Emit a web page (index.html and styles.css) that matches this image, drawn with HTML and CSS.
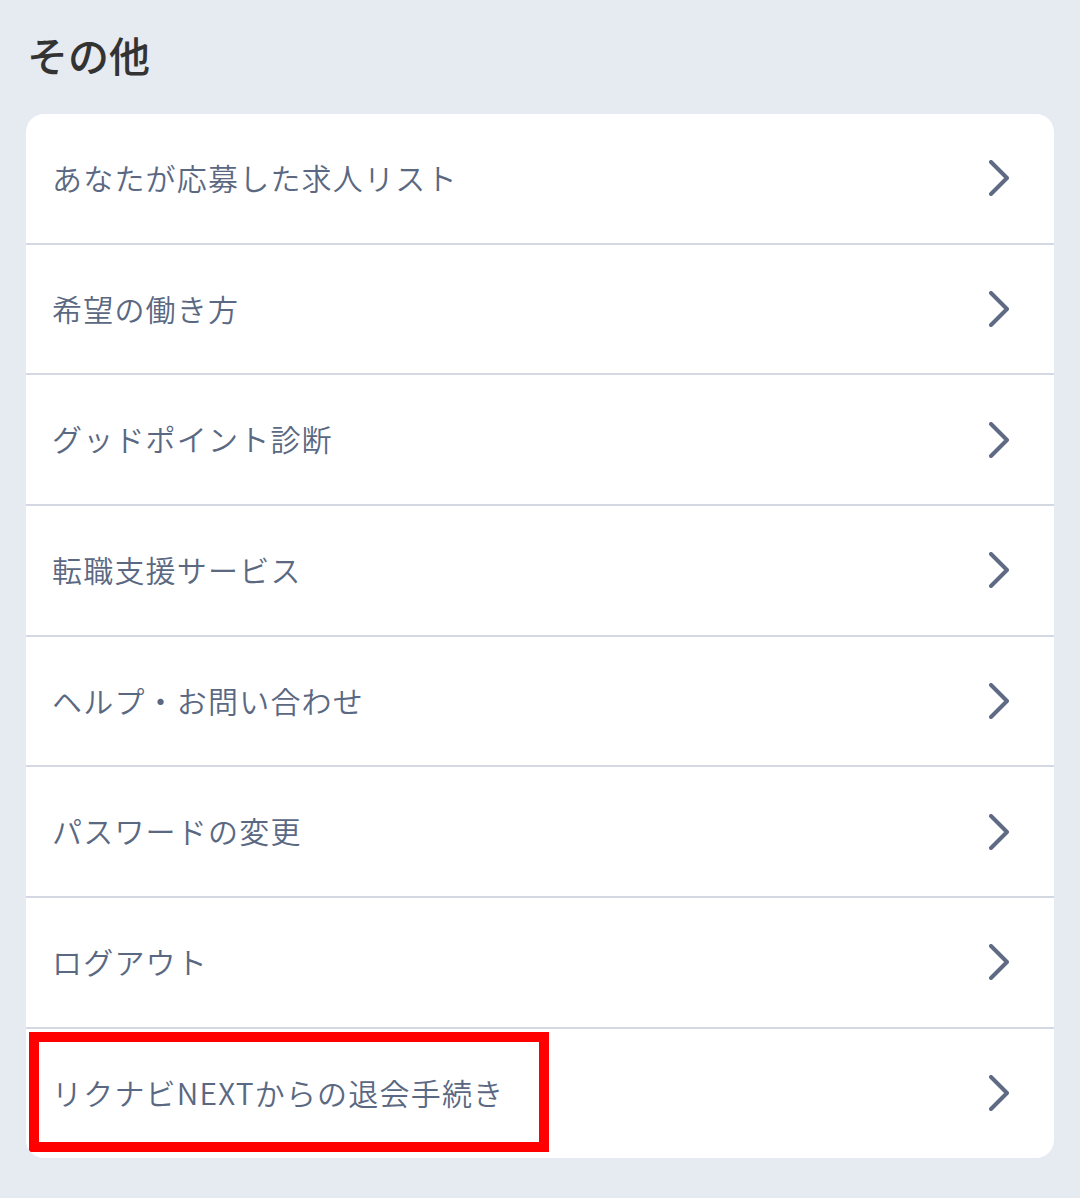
FILE: index.html
```html
<!DOCTYPE html>
<html lang="ja">
<head>
  <meta charset="UTF-8">
  <meta name="viewport" content="width=device-width, initial-scale=1.0">
  <link rel="stylesheet" href="styles.css">
  <title>その他</title>
</head>
<body>
  <h1 class="section-title">その他</h1>

  <ul class="menu">
    <li class="menu-item"><span>あなたが応募した求人リスト</span>
      <svg class="chevron" viewBox="0 0 20 36"><path d="M2 2 L18 18 L2 34"/></svg></li>
    <li class="menu-item"><span>希望の働き方</span>
      <svg class="chevron" viewBox="0 0 20 36"><path d="M2 2 L18 18 L2 34"/></svg></li>
    <li class="menu-item"><span>グッドポイント診断</span>
      <svg class="chevron" viewBox="0 0 20 36"><path d="M2 2 L18 18 L2 34"/></svg></li>
    <li class="menu-item"><span>転職支援サービス</span>
      <svg class="chevron" viewBox="0 0 20 36"><path d="M2 2 L18 18 L2 34"/></svg></li>
    <li class="menu-item"><span>ヘルプ・お問い合わせ</span>
      <svg class="chevron" viewBox="0 0 20 36"><path d="M2 2 L18 18 L2 34"/></svg></li>
    <li class="menu-item"><span>パスワードの変更</span>
      <svg class="chevron" viewBox="0 0 20 36"><path d="M2 2 L18 18 L2 34"/></svg></li>
    <li class="menu-item"><span>ログアウト</span>
      <svg class="chevron" viewBox="0 0 20 36"><path d="M2 2 L18 18 L2 34"/></svg></li>
    <li class="menu-item menu-item-marked"><span>リクナビNEXTからの退会手続き</span>
      <svg class="chevron" viewBox="0 0 20 36"><path d="M2 2 L18 18 L2 34"/></svg>
      <div class="highlight"></div></li>
  </ul>
</body>
</html>
```

FILE: styles.css
```css
body {
  font-family: "Noto Sans CJK JP", "Noto Sans", sans-serif;
  background-color: #e6eaf1;
  margin: 0;
  padding: 30px 26px 0;
}

.section-title {
  font-size: 41px;
  font-weight: 500;
  line-height: 48px;
  color: #333;
  margin: 0 0 36px 1px;
}

.menu {
  list-style: none;
  margin: 0;
  padding: 0;
  background-color: #fff;
  border-radius: 18px;
  overflow: hidden;
}

.menu-item {
  height: 128.7px;
  display: flex;
  align-items: center;
  justify-content: space-between;
  padding: 0 45px 0 26px;
  border-bottom: 2px solid #d3d8e2;
  font-size: 30px;
  font-weight: 350;
  letter-spacing: 1.2px;
  color: #5a6882;
}

.menu-item span {
  margin-top: -3px;
}

.menu-item:last-child {
  border-bottom: none;
}

.menu-item-marked {
  position: relative;
}

.chevron {
  width: 20px;
  height: 36px;
  fill: none;
  stroke: #5f6b84;
  stroke-width: 4;
  stroke-linecap: round;
  stroke-linejoin: round;
}

.highlight {
  position: absolute;
  top: 3px;
  left: 3px;
  width: 500px;
  height: 100px;
  border: 10px solid #ff0000;
}
```
